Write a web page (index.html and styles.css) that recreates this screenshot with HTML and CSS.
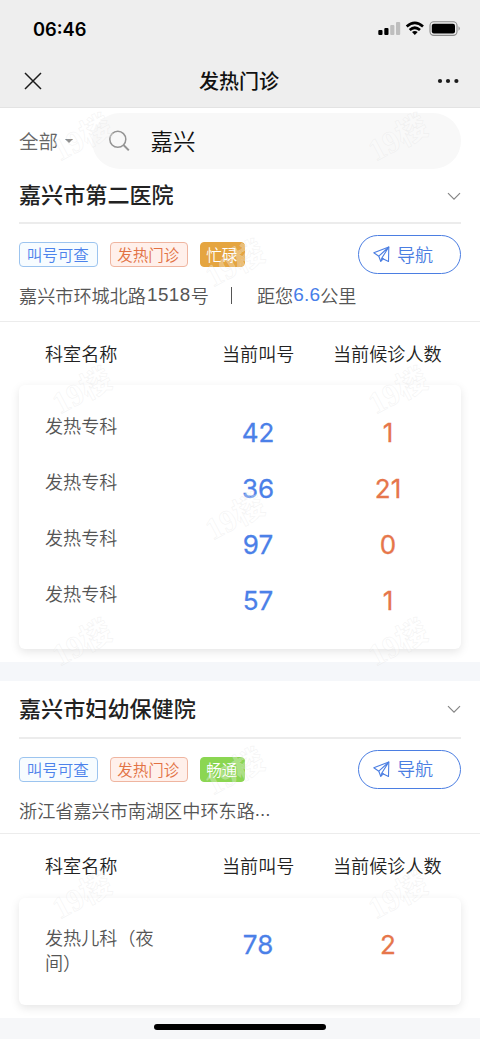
FILE: index.html
```html
<!DOCTYPE html>
<html lang="zh-CN">
<head>
<meta charset="utf-8">
<meta name="viewport" content="width=device-width">
<title>发热门诊</title>
<link rel="stylesheet" href="styles.css">
</head>
<body>
<div class="screen">
  <header class="top">
    <div class="status">
      <span class="time">06:46</span>
      <svg class="status-icons" width="82" height="16" viewBox="0 0 82 16">
        <rect x="0.3" y="9" width="4.2" height="5" rx="1"/>
        <rect x="6.3" y="7" width="4.2" height="7" rx="1"/>
        <g fill="#bebebe"><rect x="12.2" y="4" width="4.2" height="10" rx="1"/><rect x="18" y="1" width="4.2" height="13" rx="1"/></g>
        <g fill="none" stroke="#000" stroke-width="2.7"><path d="M28.7 5.4Q36.8 -1.8 45 5.4"/><path d="M31.7 9Q36.8 4.5 42 9"/></g>
        <path d="M34 11Q36.8 8.8 39.7 11L36.8 14Z"/>
        <rect x="52" y="0.8" width="27" height="13.6" rx="3.8" fill="none" stroke="#8b8b8b" stroke-width="1.1"/>
        <rect x="53.8" y="2.7" width="23.2" height="9.8" rx="2"/>
        <path d="M80.6 5.3Q82.6 7.5 80.6 9.8Z" fill="#777"/>
      </svg>
    </div>
    <div class="nav">
      <svg width="18" height="18" viewBox="0 0 18 18"><path d="M1 1L17 17M17 1L1 17" fill="none" stroke="#1b1b1b" stroke-width="1.5"/></svg>
      <h1>发热门诊</h1>
      <svg width="22" height="6" viewBox="0 0 22 6" fill="#1b1b1b"><circle cx="3" cy="3" r="2.1"/><circle cx="11" cy="3" r="2.1"/><circle cx="19.4" cy="3" r="2.1"/></svg>
    </div>
  </header>

  <div class="search">
    <span class="filter">全部</span><i class="caret"></i>
    <div class="field">
      <svg width="22" height="22" viewBox="0 0 22 22" fill="none" stroke="#949494" stroke-width="1.5"><circle cx="9.8" cy="9.3" r="8"/><path d="M15.5 15L20.8 20.4" stroke-width="2"/></svg>
      <span>嘉兴</span>
    </div>
  </div>

  <section class="hospital">
    <div class="name"><h2>嘉兴市第二医院</h2><svg width="14" height="9" viewBox="0 0 14 9"><path d="M1 1.2L7 7.2L13 1.2" fill="none" stroke="#858585" stroke-width="1.2"/></svg></div>
    <div class="info">
      <div class="tags">
        <span class="tag blue">叫号可查</span><span class="tag orange">发热门诊</span><span class="tag busy">忙碌</span>
        <a class="go"><svg width="17" height="17" viewBox="0 0 17 17" fill="none" stroke="#4b7ee2" stroke-width="1.1" stroke-linejoin="round"><path d="M.8 6.8L15.8 1L15.5 15.5L10.4 12.9L7.7 15.3L5.8 10.2Z"/><path d="M5.8 10.2L15.8 1L9 11.8L7.7 15.3M9 11.8L10.6 13"/></svg><span>导航</span></a>
      </div>
      <p class="address">嘉兴市环城北路<u>1518</u>号<i></i>距您<b>6.6</b>公里</p>
    </div>
    <div class="row head"><span>科室名称</span><span>当前叫号</span><span>当前候诊人数</span></div>
    <div class="card">
      <div class="row"><span>发热专科</span><strong>42</strong><em>1</em></div>
      <div class="row"><span>发热专科</span><strong>36</strong><em>21</em></div>
      <div class="row"><span>发热专科</span><strong>97</strong><em>0</em></div>
      <div class="row"><span>发热专科</span><strong>57</strong><em>1</em></div>
    </div>
  </section>

  <section class="hospital second">
    <div class="name"><h2>嘉兴市妇幼保健院</h2><svg width="14" height="9" viewBox="0 0 14 9"><path d="M1 1.2L7 7.2L13 1.2" fill="none" stroke="#858585" stroke-width="1.2"/></svg></div>
    <div class="info">
      <div class="tags">
        <span class="tag blue">叫号可查</span><span class="tag orange">发热门诊</span><span class="tag free">畅通</span>
        <a class="go"><svg width="17" height="17" viewBox="0 0 17 17" fill="none" stroke="#4b7ee2" stroke-width="1.1" stroke-linejoin="round"><path d="M.8 6.8L15.8 1L15.5 15.5L10.4 12.9L7.7 15.3L5.8 10.2Z"/><path d="M5.8 10.2L15.8 1L9 11.8L7.7 15.3M9 11.8L10.6 13"/></svg><span>导航</span></a>
      </div>
      <p class="address">浙江省嘉兴市南湖区中环东路<span class="dots">...</span></p>
    </div>
    <div class="row head"><span>科室名称</span><span>当前叫号</span><span>当前候诊人数</span></div>
    <div class="card short">
      <div class="row"><span>发热儿科（夜间）</span><strong>78</strong><em>2</em></div>
    </div>
  </section>
  <footer class="bottom"><div class="home"></div></footer>

  <svg class="marks" width="480" height="1039" viewBox="0 0 480 1039" aria-hidden="true">
    <g class="mark">
      <text transform="translate(82 138) rotate(-28)">19楼</text>
      <text transform="translate(398 138) rotate(-28)">19楼</text>
      <text transform="translate(235 264) rotate(-28)">19楼</text>
      <text transform="translate(82 391) rotate(-28)">19楼</text>
      <text transform="translate(398 391) rotate(-28)">19楼</text>
      <text transform="translate(235 517) rotate(-28)">19楼</text>
      <text transform="translate(82 643) rotate(-28)">19楼</text>
      <text transform="translate(398 643) rotate(-28)">19楼</text>
      <text transform="translate(235 772) rotate(-28)">19楼</text>
      <text transform="translate(82 896) rotate(-28)">19楼</text>
      <text transform="translate(398 896) rotate(-28)">19楼</text>
    </g>
  </svg>
</div>
</body>
</html>
```
FILE: styles.css
```css
* { box-sizing: border-box; }
body { margin: 0; background: #fff; font-family: "Noto Sans CJK SC", sans-serif; color: #222; }
h1, h2, p { margin: 0; }
i, em { font-style: normal; }
svg { display: block; flex: none; }
.screen { position: relative; width: 480px; height: 1039px; overflow: hidden; background: #fff; display: flex; flex-direction: column; }
.top { height: 108px; flex: none; background: #eee; border-bottom: 1px solid #e3e3e3; }
.status { height: 57px; padding: 1px 20px 0 33px; display: flex; align-items: center; justify-content: space-between; }
.time { font: 600 18.3px Inter, sans-serif; color: #000; }
.nav { height: 49px; padding: 0 21px 0 24px; display: flex; align-items: center; justify-content: space-between; }
.nav svg { margin-top: -1px; }
.nav h1 { font-size: 20px; font-weight: 500; line-height: 30px; color: #111; margin: -1px 1px 0 0; }
.search { height: 61px; padding: 5px 19px 0 19px; display: flex; align-items: center; flex: none; }
.filter { font-size: 19.5px; line-height: 28px; color: #666; font-weight: 350; }
.caret { margin: 0 19px 0 7px; border: 4px solid transparent; border-top-color: #666; border-bottom: 0; }
.field { flex: 1; height: 56px; border-radius: 28px; background: #f8f8f8; display: flex; align-items: center; gap: 20.5px; padding-left: 16px; font-size: 22.5px; font-weight: 350; color: #111; }
.field span { margin-top: -3px; }
.field svg { margin-top: -1px; }
.name { height: 55px; margin: 0 19px; border-bottom: 2px solid #ececec; display: flex; justify-content: space-between; align-items: center; }
.name h2 { font-size: 22.1px; line-height: 32px; font-weight: 500; margin-top: -5px; }
.name svg { margin-top: 1px; }
.info { height: 98px; padding: 11px 19px 0; border-bottom: 1px solid #ececec; }
.tags { height: 39px; display: flex; align-items: center; gap: 12px; }
.tag { height: 25px; width: 78.5px; border: 1px solid; border-radius: 4px; font-size: 15.5px; line-height: 22px; padding-right: 1px; text-align: center; font-weight: 350; }
.blue { color: #4c82eb; border-color: #9cc4ef; background: #f7fcff; }
.orange { color: #e27143; border-color: #efb5a0; background: #fff0eb; }
.busy, .free { width: 44.5px; color: #fff; }
.busy { background: #e5a540; border-color: #e5a540; }
.free { background: #8bd652; border-color: #8bd652; }
.go { margin-left: auto; width: 103px; height: 39px; border: 1.4px solid #4b7ee2; border-radius: 20px; display: flex; align-items: center; padding-left: 14px; gap: 7px; font-size: 18.1px; line-height: 26px; color: #4b7ee2; font-weight: 350; }
.go span { margin-top: -2px; }
.address { padding-top: 8px; font-size: 18.15px; line-height: 26px; color: #555; font-weight: 350; display: flex; align-items: center; }
.address u { font: 400 18.8px "Liberation Sans", sans-serif; letter-spacing: .5px; text-decoration: none; padding-left: 1px; }
.dots { font: 400 18.8px "Liberation Sans", sans-serif; }
.address i { width: 1px; height: 17px; background: #555; margin: 0 24.5px 0 22.5px; }
.address b { font: 400 19px "Liberation Sans", sans-serif; color: #477ee9; letter-spacing: .2px; }
.row { display: grid; grid-template-columns: 120px 186px 74px; padding-left: 26px; }
.head { margin: 0 19px; padding-top: 18px; height: 63px; grid-template-columns: 148px 140px 140px; font-size: 18.1px; line-height: 26px; font-weight: 350; color: #222; white-space: nowrap; }
.head span:nth-child(2) { padding-left: 29px; }
.card { height: 264px; margin: 0 19px; padding-top: 28px; border-radius: 6px; background: #fff; box-shadow: 0 3px 10px #0000001a; }
.card .row { height: 56.1px; font-size: 18.1px; line-height: 25px; color: #555; font-weight: 350; }
.card strong, .card em { font: 400 26px/31px Inter, sans-serif; padding-top: 4px; text-align: center; color: #4b80e8; -webkit-text-stroke: .3px; }
.card em { color: #e6764b; }
.second { margin-top: 12.5px; border-top: 19px solid #f5f7fa; }
.second .name { height: 58px; }
.second .name h2 { margin-top: -3px; }
.second .info { height: 95.5px; padding-top: 11px; }
.second .head { height: 64px; padding-top: 18px; }
.card.short { height: 107px; padding-top: 27px; }
.bottom { flex: none; height: 22px; margin-top: 13px; padding-top: 6px; background: #f6f7f9; }
.home { width: 172px; height: 6px; margin: auto; border-radius: 3px; background: #000; }
.marks { position: absolute; inset: 0; pointer-events: none; }
.mark { font: 700 31px "Liberation Serif", "Noto Sans CJK SC", serif; text-anchor: middle; dominant-baseline: central; fill: #fff; fill-opacity: .3; stroke: #ddd; stroke-width: .5; stroke-opacity: .4; }
```
